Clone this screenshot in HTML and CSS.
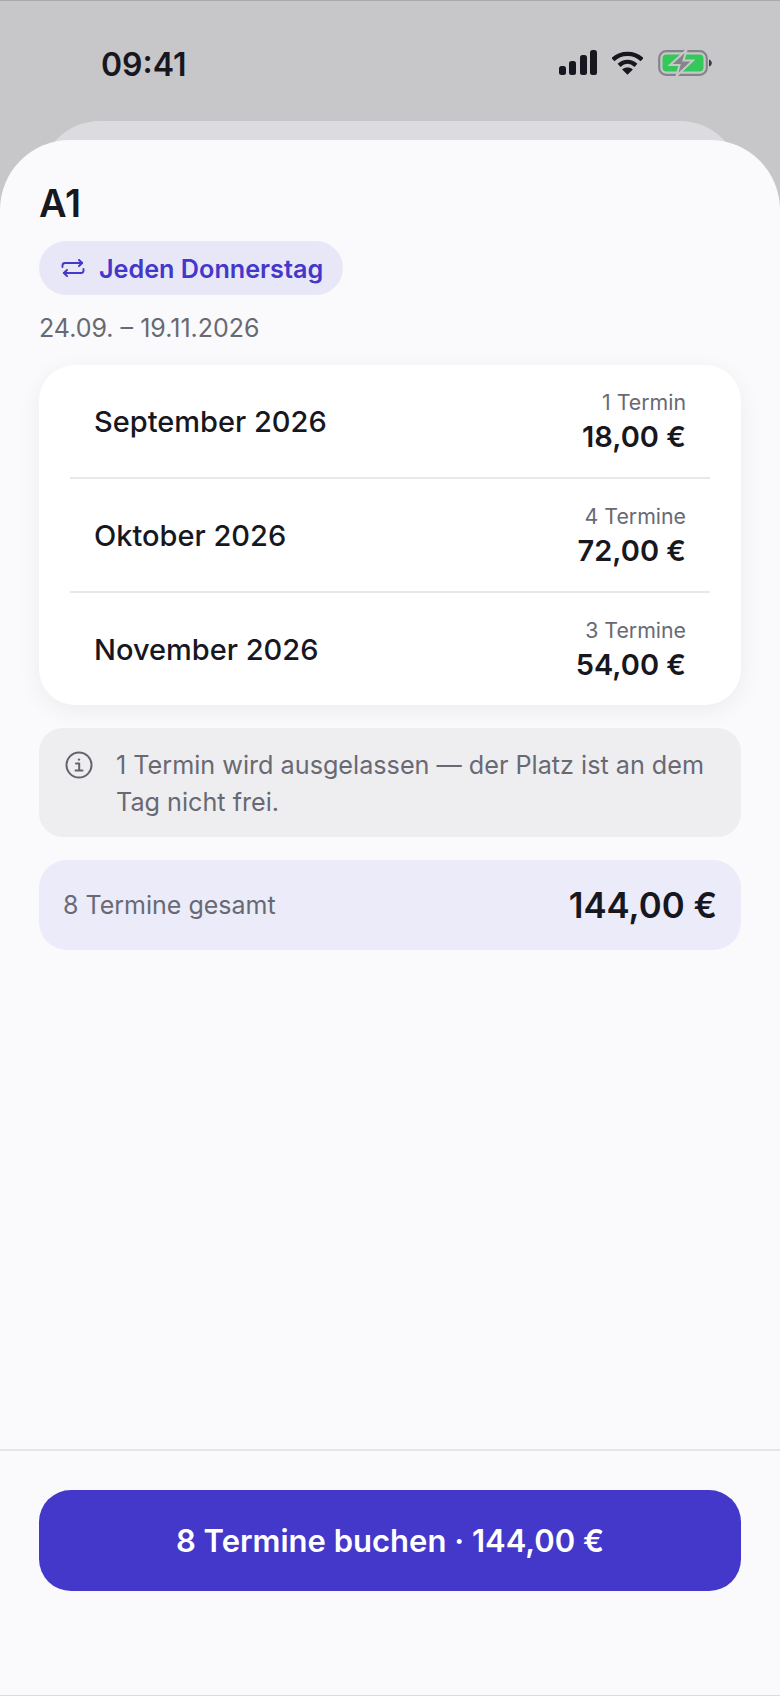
FILE: index.html
```html
<!DOCTYPE html>
<html lang="de">
<head>
    <meta charset="UTF-8">
    <meta name="viewport" content="width=device-width, initial-scale=1.0">
    <title>A1 buchen</title>
    <link rel="stylesheet" href="styles.css">
</head>
<body>
    <div class="screen">

        <!-- Status bar -->
        <div class="status-bar">
            <span class="time">09:41</span>
            <div class="status-icons">
                <svg width="38" height="25" viewBox="0 0 38 25" fill="#17171f">
                    <rect x="0" y="16" width="7" height="9" rx="2.5"/>
                    <rect x="10" y="11" width="7" height="14" rx="2.5"/>
                    <rect x="21" y="5" width="7" height="20" rx="2.5"/>
                    <rect x="31" y="0" width="7" height="25" rx="2.5"/>
                </svg>
                <svg class="wifi" width="31" height="24" viewBox="0 0 33 25" fill="none" stroke="#17171f" stroke-width="4.6">
                    <path d="M1 9C9.500 .6 23.500 .6 32 9"/>
                    <path d="M7.500 15C13 10 20 10 25.500 15"/>
                    <path d="M16.500 25L10.800 19.400C14 16.600 19 16.600 22.200 19.400Z" fill="#17171f" stroke="none"/>
                </svg>
                <svg width="54" height="26" viewBox="0 0 54 26">
                    <rect x="1.200" y="1.200" width="47.600" height="23.600" rx="7" fill="none" stroke="#84848c" stroke-width="2.200"/>
                    <rect x="4.500" y="4.500" width="41" height="17" rx="4" fill="#34c759"/>
                    <path d="M51 9.500c1.800.5 2.800 2 2.800 3.500s-1 3-2.800 3.500z" fill="#3a3a42"/>
                    <path d="M28.500 0L12 15h9.500L18.500 26 35 10.500h-9.500z" fill="#85858d" stroke="#c7c7c9" stroke-width="2"/>
                </svg>
            </div>
        </div>

        <div class="back-sheet"></div>

        <div class="sheet">
            <div class="sheet-body">
                <h1 class="title">A1</h1>
                <div class="pill">
                    <svg width="24" height="18" viewBox="0 0 24 18" fill="none" stroke="#4338ca" stroke-width="1.900" stroke-linecap="round" stroke-linejoin="round">
                        <path d="M1.500 8V6.500A2.500 2.500 0 0 1 4 4h17"/>
                        <path d="M18 1l3.200 3L18 7"/>
                        <path d="M22.500 10v1.500a2.500 2.500 0 0 1-2.500 2.500H3"/>
                        <path d="M6 11l-3.200 3L6 17"/>
                    </svg>
                    <span class="pill-text">Jeden Donnerstag</span>
                </div>
                <p class="dates">24.09. – 19.11.2026</p>

                <div class="months">
                    <div class="month">
                        <span class="month-name">September 2026</span>
                        <div class="month-right">
                            <span class="month-count">1 Termin</span>
                            <span class="month-price">18,00 €</span>
                        </div>
                    </div>
                    <div class="month">
                        <span class="month-name">Oktober 2026</span>
                        <div class="month-right">
                            <span class="month-count">4 Termine</span>
                            <span class="month-price">72,00 €</span>
                        </div>
                    </div>
                    <div class="month">
                        <span class="month-name">November 2026</span>
                        <div class="month-right">
                            <span class="month-count">3 Termine</span>
                            <span class="month-price">54,00 €</span>
                        </div>
                    </div>
                </div>

                <div class="notice">
                    <svg class="notice-icon" width="28" height="28" viewBox="0 0 28 28" fill="none" stroke="#63636e" stroke-width="2">
                        <circle cx="14" cy="14" r="12.500"/>
                        <circle cx="14" cy="8.600" r="1.200" fill="#63636e" stroke="none"/>
                        <path d="M11 12.500h3.200v7M10.500 19.600h7" stroke-linecap="round" stroke-linejoin="round"/>
                    </svg>
                    <p>1 Termin wird ausgelassen — der Platz ist an dem Tag nicht frei.</p>
                </div>

                <div class="total">
                    <span class="total-label">8 Termine gesamt</span>
                    <span class="total-price">144,00 €</span>
                </div>
            </div>

            <div class="footer">
                <button class="book-btn">8 Termine buchen · 144,00 €</button>
            </div>
        </div>
    </div>
</body>
</html>
```

FILE: styles.css
```css
* { box-sizing: border-box; }
html, body { margin: 0; padding: 0; }
body { font-family: Inter, "Noto Sans", sans-serif; color: #17171f; background: #c7c7c9; }

.screen { position: relative; width: 780px; height: 1696px; display: flex; flex-direction: column; overflow: hidden; border-top: 1px solid #a9a9ab; background: #c7c7c9; }

/* status bar */
.status-bar { height: 139px; flex: none; display: flex; justify-content: space-between; padding: 45px 68px 0 101px; }
.time { font-size: 32px; line-height: 38px; font-weight: 600; }
.status-icons { display: flex; align-items: flex-start; gap: 15px; height: 38px; padding-top: 4px; }
.wifi { margin-top: 1px; }

.back-sheet { position: absolute; top: 120px; left: 40px; right: 40px; height: 80px; background: #dcdce0; border-radius: 60px 60px 0 0; }

/* sheet */
.sheet { position: relative; flex: 1; display: flex; flex-direction: column; background: #fafafc; border-radius: 70px 70px 0 0; }
.sheet-body { flex: 1; padding: 40px 39px 0; }

.title { margin: 0; font-size: 38px; line-height: 46px; font-weight: 600; }

.pill { display: inline-flex; align-items: center; gap: 14px; height: 54px; margin-top: 15px; padding: 0 20px 0 22px; border-radius: 27px; background: #e8e7f7; color: #4338ca; font-size: 25.2px; font-weight: 600; }
.pill-text { margin-top: 2px; }

.dates { margin: 15px 0 0; font-size: 25px; line-height: 36px; color: #696974; }

.months { margin-top: 19px; padding: 0 31px; background: #fff; border-radius: 36px; box-shadow: 0 6px 24px rgba(20, 20, 40, 0.06); }
.month { height: 114px; display: flex; justify-content: space-between; align-items: center; padding: 0 24px; border-bottom: 2px solid #e8e8ea; }
.month:last-child { border-bottom: none; height: 112px; }
.month-name { font-size: 29px; font-weight: 500; }
.month-right { display: flex; flex-direction: column; align-items: flex-end; padding-top: 2px; }
.month-count { font-size: 21.3px; line-height: 29px; color: #696974; }
.month-price { font-size: 29px; line-height: 40px; font-weight: 600; }

.notice { display: flex; gap: 23px; margin-top: 23px; padding: 19px 24px 16px 26px; background: #eeeef0; border-radius: 24px; }
.notice-icon { flex: none; margin-top: 4px; }
.notice p { margin: 0; font-size: 25.2px; line-height: 37px; color: #696974; }

.total { display: flex; justify-content: space-between; align-items: center; height: 90px; margin-top: 23px; padding: 0 24px; background: #ebebf9; border-radius: 28px; }
.total-label { font-size: 25px; color: #696974; }
.total-price { font-size: 34.8px; font-weight: 600; }

/* footer */
.footer { flex: none; height: 247px; padding: 39px 39px 0; border-top: 2px solid #e6e6e9; border-bottom: 1px solid #dcdce0; }
.book-btn { display: block; width: 100%; height: 101px; border: none; border-radius: 32px; background: #4338ca; color: #fff; font-family: inherit; font-size: 31px; font-weight: 600; cursor: pointer; }
```
